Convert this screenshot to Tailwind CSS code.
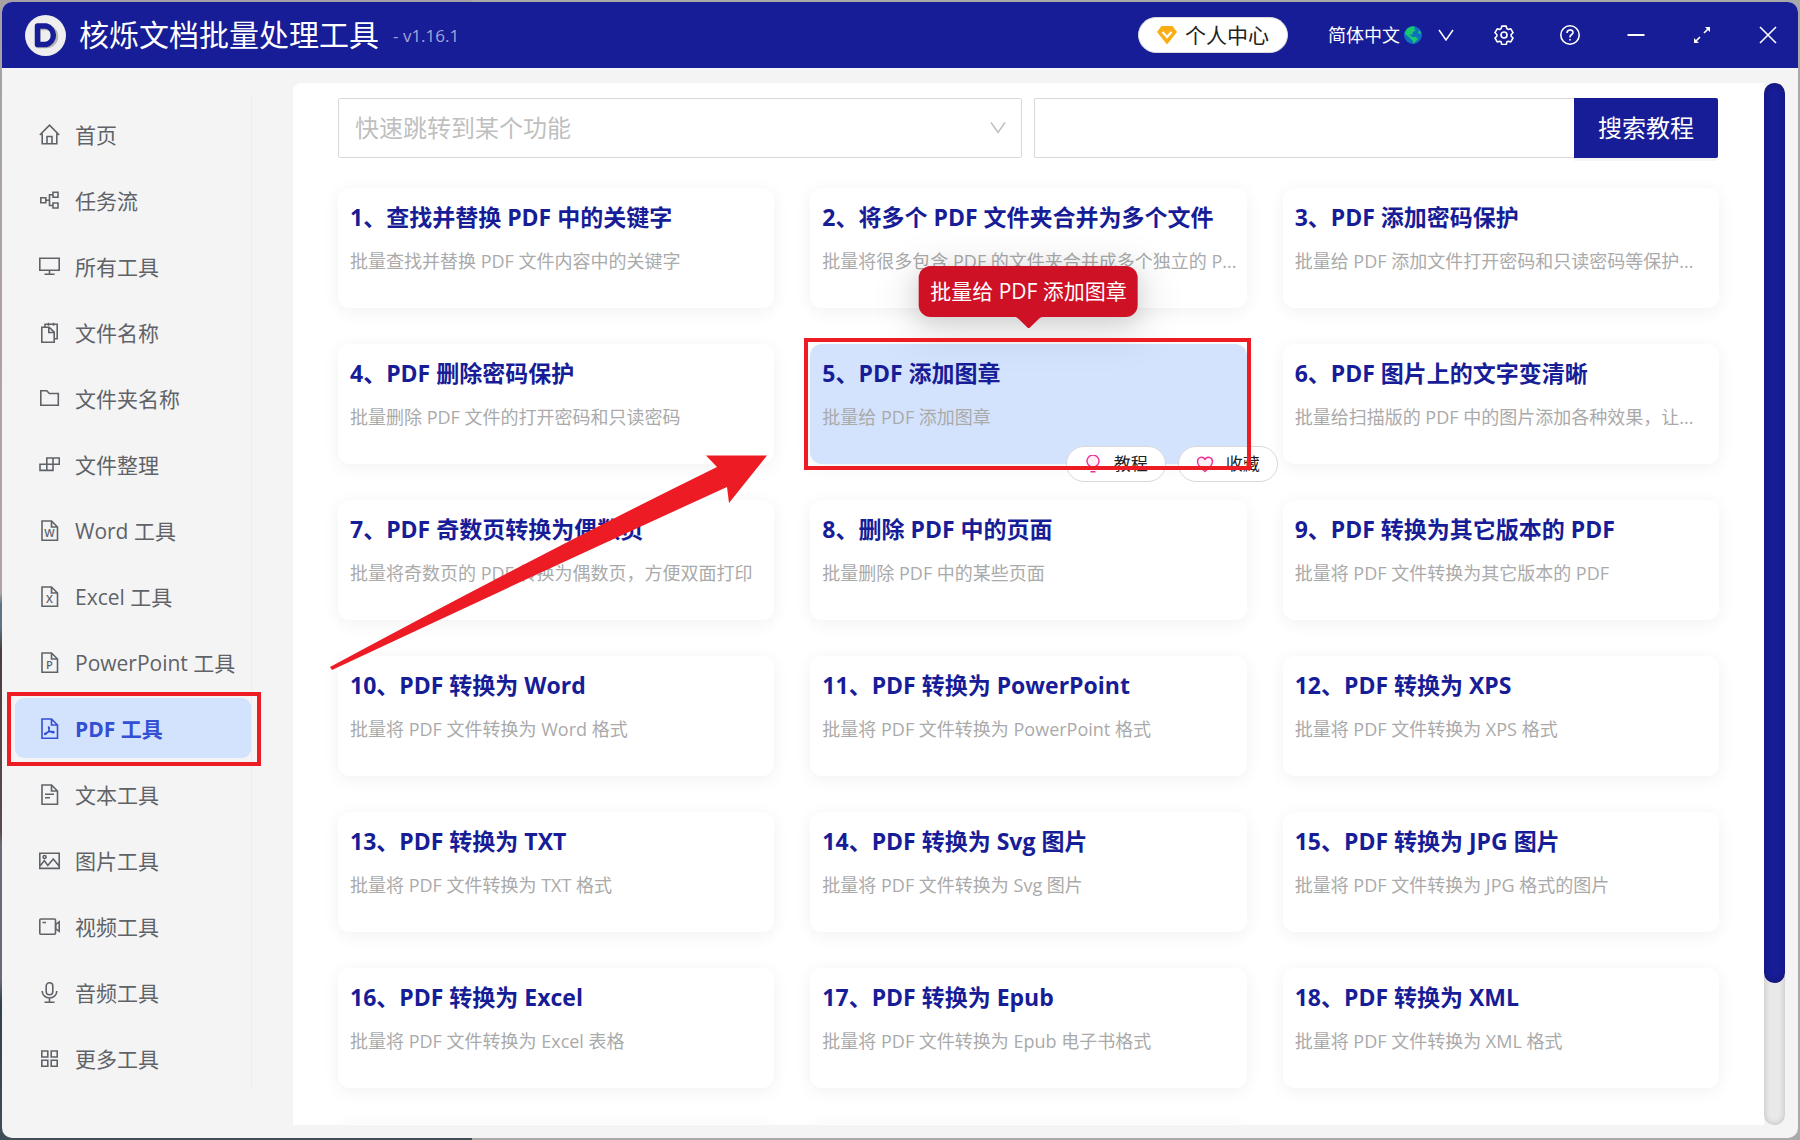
<!DOCTYPE html>
<html lang="zh-CN">
<head>
<meta charset="utf-8">
<meta name="viewport" content="width=device-width, initial-scale=1">
<title>核烁文档批量处理工具</title>
<script src="https://cdn.jsdelivr.net/npm/@tailwindcss/browser@4"></script>
</head>
<body class="font-['Open_Sans','Noto_Sans_CJK_SC',sans-serif]">
<div class="h-screen overflow-hidden bg-[#a9a9a9] p-[2px] bg-[linear-gradient(#a5a1a4,#b3a3a3_52%,#5d7383_53%,#5d7383_55%,#4a3f3f_57%,#5a4c4c_73%,#6a6a74_74%,#6a6a74_86%,#2f414b_88%,#3f4f55)] bg-[length:472px_100%] bg-no-repeat">
<div class="flex h-full flex-col overflow-hidden rounded-[10px] bg-[#f4f4f4]">

  <header class="flex h-[66px] shrink-0 items-center bg-[#171c97] pr-5 pl-[23px] text-white">
    <svg class="size-[41px] shrink-0" viewBox="0 0 41 41" aria-hidden="true">
      <circle cx="20.500" cy="20.500" r="20.500" fill="#eeeeee"/>
      <path d="M13 12.500h8.500a9 9 0 0 1 0 18H13z" fill="none" stroke="#b5b5b5" stroke-width="5.500" stroke-linejoin="round"/>
      <path d="M12.500 11h8.500a9.500 9.500 0 0 1 0 18.500h-8.500z" fill="none" stroke="#171c97" stroke-width="5.500" stroke-linejoin="round"/>
    </svg>
    <h1 class="ml-[13px] text-[30px] leading-[40px]">核烁文档批量处理工具</h1>
    <span class="mt-[2px] ml-[14px] text-[17px] leading-[24px] text-[#a3a5d8]">- v1.16.1</span>
    <button class="ml-auto flex h-9 w-[150px] items-center justify-center gap-2 rounded-full border border-[#d9d9d9] bg-white text-[21px] leading-[28px] text-[#222222]">
      <svg class="size-5" viewBox="0 0 20 20" aria-hidden="true"><path d="M4.500 1h11L20 7l-10 12.500L0 7z" fill="#faad14"/><path d="M5.500 7l4.500 5 4.500-5" fill="none" stroke="#fff" stroke-width="2.200"/></svg>
      个人中心
    </button>
    <button class="ml-10 flex items-center text-[18px] leading-[24px]">
      简体中文
      <svg class="ml-1 size-[18px]" viewBox="0 0 18 18" aria-hidden="true"><circle cx="9" cy="9" r="9" fill="#0f6fc0"/><path d="M3 3c2-2 5-3 8-2l-1 2 2 1-3 2-1 3-3-1 3 3 4 0 2 2-3 3-1 2-2-4-3-3L1 8c0-2 1-4 2-5z" fill="#19c96b"/><path d="M15 4l2 3-1 1-2-1z" fill="#19c96b"/></svg>
      <svg class="ml-4 size-4" viewBox="0 0 16 16" fill="none" stroke="currentColor" stroke-width="1.500" aria-hidden="true"><path d="M1 3l7 10 7-10"/></svg>
    </button>
    <div class="ml-10 flex items-center gap-[46px]">
      <button aria-label="设置"><svg class="block size-5" viewBox="0 0 20 20" fill="none" stroke="currentColor" stroke-width="1.700" stroke-linejoin="round"><circle cx="10" cy="10" r="3"/><path d="M7.600 1h4.800l.6 2.700 1.600.9 2.600-.8 2.400 4.200-2 1.900v1.800l2 1.900-2.400 4.200-2.600-.8-1.600.9-.6 2.700H7.600L7 17.900 5.400 17l-2.600.8L.4 13.600l2-1.900V9.900L.4 8l2.400-4.200 2.600.8L7 3.700z" transform="translate(.6 .2) scale(.94)"/></svg></button>
      <button aria-label="帮助"><svg class="block size-5" viewBox="0 0 20 20" fill="none" stroke="currentColor" stroke-width="1.600"><circle cx="10" cy="10" r="9.200"/><path d="M7 8c0-4 6-4 6-.6 0 2.200-3 2-3 4.600v.4"/><path d="M10 14v1.600"/></svg></button>
      <button aria-label="最小化"><svg class="block size-5" viewBox="0 0 20 20" fill="none" stroke="currentColor" stroke-width="1.800"><path d="M1.500 10h17"/></svg></button>
      <button aria-label="最大化"><svg class="block size-5" viewBox="0 0 20 20" fill="none" stroke="currentColor" stroke-width="1.600"><path d="M12 8l5-5M3 17l5-5"/><path d="M13 2h5v5zM2 13v5h5z" fill="currentColor" stroke="none"/></svg></button>
      <button aria-label="关闭"><svg class="block size-5" viewBox="0 0 20 20" fill="none" stroke="currentColor" stroke-width="1.600"><path d="M2 2l16 16M18 2L2 18"/></svg></button>
    </div>
  </header>

  <div class="flex min-h-0 flex-1 pt-[15px] pr-[13px] pb-[13px]">
    <aside class="w-[291px] shrink-0 pt-[15px] pl-[13px]">
      <nav id="nav" class="flex w-[237px] flex-col gap-[6px] border-r border-[#ececec] pt-[6px]"></nav>
    </aside>

    <main class="relative min-w-0 flex-1 overflow-hidden rounded-tl-[8px] bg-white px-[45px] pt-[15px]">
      <div class="flex gap-3 pr-px">
        <div class="relative flex-[684_1_0%]">
          <select aria-label="功能" class="h-[60px] w-full appearance-none rounded-[2px] border border-[#d9d9d9] bg-white px-4 text-[24px] text-[#bfbfbf]"><option>快速跳转到某个功能</option></select>
          <svg class="pointer-events-none absolute top-[22px] right-4 size-4" viewBox="0 0 16 16" fill="none" stroke="#bfbfbf" stroke-width="1.500" aria-hidden="true"><path d="M1 2.500l7 10 7-10"/></svg>
        </div>
        <form class="flex flex-[684_1_0%]">
          <input type="text" aria-label="教程关键字" class="h-[60px] min-w-0 flex-1 rounded-l-[2px] border border-r-0 border-[#d9d9d9] px-4 text-[24px]">
          <button type="button" class="h-[60px] w-[144px] rounded-r-[2px] bg-[#171c97] text-[24px] text-white shadow-[0_3px_0_rgba(0,0,0,0.04)]">搜索教程</button>
        </form>
      </div>
      <div id="cards" class="mt-[30px] grid grid-cols-3 gap-9"></div>
    </main>

    <div class="flex w-[21px] shrink-0 flex-col rounded-full bg-[#e9e9e9] shadow-[inset_0_0_6px_rgba(0,0,0,0.2)]" role="scrollbar" aria-label="滚动条" aria-controls="cards" aria-valuenow="0">
      <div class="h-[86.400%] rounded-full bg-[#171c97] shadow-[inset_0_0_6px_rgba(0,0,0,0.3)]"></div>
    </div>
  </div>
</div>
</div>

<script>
const file = '<path d="M12.500 1H3v19.200h15.500V7zM12.500 1v6h6"/>';
const letter = (c) => file + `<text x="10.500" y="16.500" text-anchor="middle" font-size="11" font-weight="600" fill="currentColor" stroke="none">${c}</text>`;
const nav = [
  ['首页', '<path d="M.8 11L10.500 1.200 20.200 11M3.200 9.500v10.300h14.600V9.500M8 19.800v-7.300h5v7.300"/>'],
  ['任务流', '<path d="M1.800 7.700h5v5h-5zM14 2.200h5v5h-5zM14 13h5v5h-5zM7 10.200h3.500M14 4.700h-3.500v10.800H14"/>'],
  ['所有工具', '<path d="M.8 2.200h19.400v12H.8zM10.500 14.200v4M5.500 18.200h10"/>'],
  ['文件名称', '<path d="M2.800 5.200h7.400l5 5v10H2.800zM9.800 5.500v5h5M6 5V2.200h12.200v14.600H16M9.500 .8v3M14.500 .8v3"/>'],
  ['文件夹名称', '<path d="M1.800 2.800h6l2.500 2.700h9v11.700H1.800z"/>'],
  ['文件整理', '<path d="M7.800 4h12.500v6.200H7.800zM14 4v12.500M1 10.200h13v6.200H1zM7.800 10v6.500"/>'],
  ['Word 工具', letter('W')],
  ['Excel 工具', letter('X')],
  ['PowerPoint 工具', letter('P')],
  ['PDF 工具', file + '<path stroke-width="1.300" d="M9.500 9c1.500 0 1 3-1 5.500-1.500 2-3 2.500-3 1.500s4-2.700 8.500-2.500c1.500.1 1.500 1.500 0 1.300-2.500-.3-4.800-3-4.500-5.800z"/>', true],
  ['文本工具', file + '<path d="M6 10.200h9M6 13.700h5"/>'],
  ['图片工具', '<path d="M.8 3.200h19.400v15.200H.8zM1.500 15.500l3.800-5 3.500 5 5.500-6.500 5.700 7"/><circle cx="5.600" cy="7" r="1.500"/>'],
  ['视频工具', '<rect x=".8" y="3" width="15.700" height="15.200" rx="1"/><path d="M3.500 6.500h3.500M20.200 5.800l-3.500 2.500v4.500l3.500 2.500z"/>'],
  ['音频工具', '<rect x="7.200" y=".8" width="6.600" height="12" rx="3.300"/><path d="M3.200 9c0 9.300 14.600 9.300 14.600 0M10.500 16v4M5.500 20.200h10"/>'],
  ['更多工具', '<path d="M2.800 3h6v6h-6zM12.200 3h6v6h-6zM2.800 12.300h6v6h-6zM12.200 12.300h6v6h-6z"/>'],
];
document.getElementById('nav').innerHTML = nav.map(([label, icon, active]) => `
  <a href="#" class="relative flex h-[60px] items-center gap-[15px] rounded-[9px] pl-6 text-[21px] leading-[28px] ${active ? 'bg-[#d3e3fd] font-bold text-[#354fd3]' : 'text-[#5f6368]'}"${active ? ' aria-current="page"' : ''}>
    <svg class="size-[21px] shrink-0" viewBox="0 0 21 21" fill="none" stroke="currentColor" stroke-width="1.600" aria-hidden="true">${icon}</svg>
    <span class="pt-[2px]">${label}</span>
    ${active ? '<span class="pointer-events-none absolute -top-[6px] -right-[10px] -bottom-2 -left-2 border-4 border-[#ed1c24]"></span>' : ''}
  </a>`).join('');

const cards = [
  ['查找并替换 PDF 中的关键字', '批量查找并替换 PDF 文件内容中的关键字'],
  ['将多个 PDF 文件夹合并为多个文件', '批量将很多包含 PDF 的文件夹合并成多个独立的 P...'],
  ['PDF 添加密码保护', '批量给 PDF 添加文件打开密码和只读密码等保护...'],
  ['PDF 删除密码保护', '批量删除 PDF 文件的打开密码和只读密码'],
  ['PDF 添加图章', '批量给 PDF 添加图章'],
  ['PDF 图片上的文字变清晰', '批量给扫描版的 PDF 中的图片添加各种效果，让...'],
  ['PDF 奇数页转换为偶数页', '批量将奇数页的 PDF 转换为偶数页，方便双面打印'],
  ['删除 PDF 中的页面', '批量删除 PDF 中的某些页面'],
  ['PDF 转换为其它版本的 PDF', '批量将 PDF 文件转换为其它版本的 PDF'],
  ['PDF 转换为 Word', '批量将 PDF 文件转换为 Word 格式'],
  ['PDF 转换为 PowerPoint', '批量将 PDF 文件转换为 PowerPoint 格式'],
  ['PDF 转换为 XPS', '批量将 PDF 文件转换为 XPS 格式'],
  ['PDF 转换为 TXT', '批量将 PDF 文件转换为 TXT 格式'],
  ['PDF 转换为 Svg 图片', '批量将 PDF 文件转换为 Svg 图片'],
  ['PDF 转换为 JPG 图片', '批量将 PDF 文件转换为 JPG 格式的图片'],
  ['PDF 转换为 Excel', '批量将 PDF 文件转换为 Excel 表格'],
  ['PDF 转换为 Epub', '批量将 PDF 文件转换为 Epub 电子书格式'],
  ['PDF 转换为 XML', '批量将 PDF 文件转换为 XML 格式'],
];
const hovered = `
  <div role="tooltip" class="absolute bottom-full left-1/2 mb-[27px] -translate-x-1/2 rounded-[12px] bg-[#cf1126] px-[11px] py-3 text-[21px] leading-[27px] whitespace-nowrap text-white shadow-[0_9px_42px_12px_rgba(0,0,0,0.08),0_6px_24px_rgba(0,0,0,0.12)]">批量给 PDF 添加图章
    <svg class="absolute top-full left-1/2 h-[11px] w-7 -translate-x-1/2" viewBox="0 0 28 11" aria-hidden="true"><path d="M0 0c2 0 3 1 4 2l8.500 8.300a2 2 0 0 0 3 0L24 2c1-1 2-2 4-2z" fill="#cf1126"/></svg>
  </div>
  <div class="absolute top-[102px] -right-[31px] flex gap-3">
    <button class="flex h-9 w-[100px] items-center justify-center gap-3 rounded-full border border-[#d9d9d9] bg-white text-[17px] text-[#222222]"><svg class="size-[18px]" viewBox="0 0 18 18" fill="#fff0f6" stroke="#eb2f96" stroke-width="1.400" aria-hidden="true"><path d="M6.300 13v-1.500a6 6 0 1 1 5.400 0V13zM6.500 16.800h5"/></svg>教程</button>
    <button class="flex h-9 w-[100px] items-center justify-center gap-3 rounded-full border border-[#d9d9d9] bg-white text-[17px] text-[#222222]"><svg class="size-[18px]" viewBox="0 0 18 18" fill="#fff0f6" stroke="#eb2f96" stroke-width="1.400" aria-hidden="true"><path d="M9 16.500C5 13.500 1.500 10.500 1.500 6.500 1.500 2 7 .8 9 4.300 11 .8 16.500 2 16.500 6.500c0 4-3.500 7-7.500 10z"/></svg>收藏</button>
  </div>
  <span class="pointer-events-none absolute -top-[6px] -right-1 -bottom-[6px] -left-[6px] border-4 border-[#ed1c24]"></span>`;
const arrow = `<svg class="pointer-events-none absolute -top-[45px] -left-2 h-[216px] w-[437px]" viewBox="0 0 437 216" aria-hidden="true"><path d="M0 212Q200 104 387 12L376 .5H437L399 48 397 32Q200 122 2 215z" fill="#ed1c24"/></svg>`;
document.getElementById('cards').innerHTML = cards.map(([title, text], i) => `
  <article class="relative h-[120px] min-w-0 rounded-[12px] pt-3 pr-2 pl-3 shadow-[0_3px_18px_rgba(0,0,0,0.06)] ${i === 4 ? 'z-10 bg-[#d3e3fd]' : i === 6 ? 'z-20 bg-white' : 'bg-white'}">
    <h2 class="truncate text-[23px] leading-[34px] font-bold text-[#171c97]">${i + 1}、${title}</h2>
    <p class="mt-[15px] truncate text-[18px] leading-[24px] text-[#aaaaaa]">${text}</p>
    ${i === 4 ? hovered : i === 6 ? arrow : ''}
  </article>`).join('') + '<div class="h-[120px] rounded-[12px] bg-white shadow-[0_3px_18px_rgba(0,0,0,0.06)]"></div>'.repeat(2);
</script>
</body>
</html>
